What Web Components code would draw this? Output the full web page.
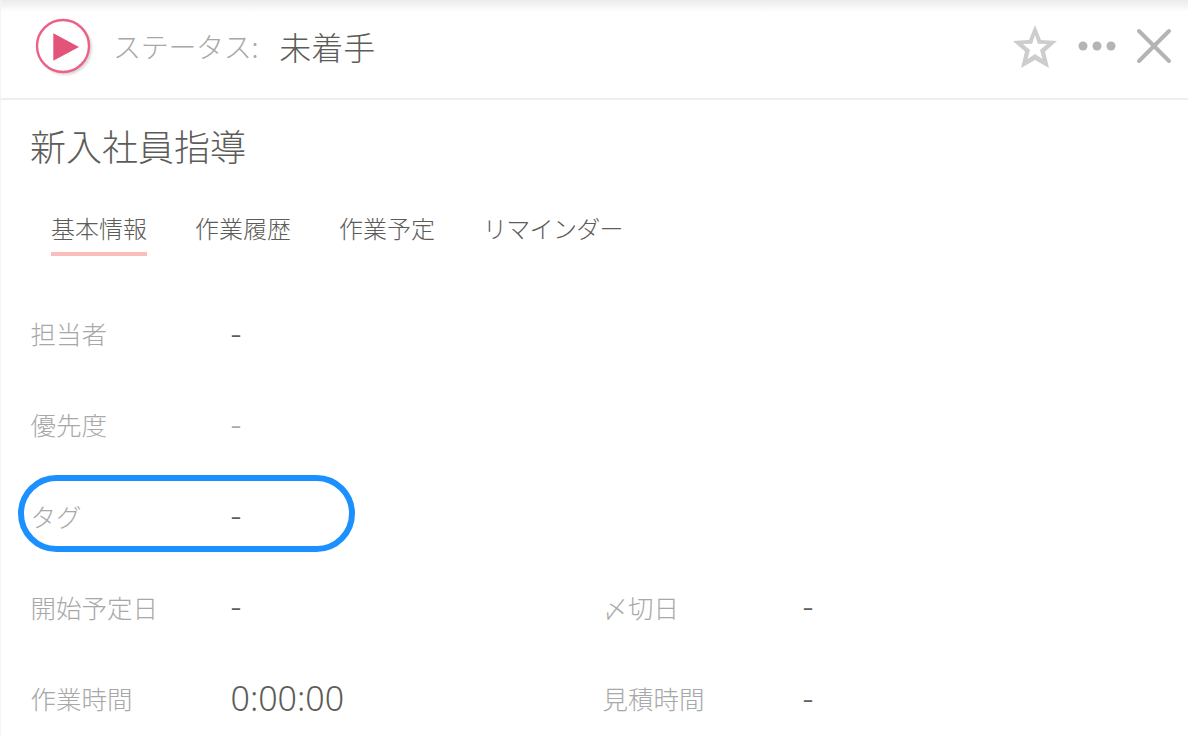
<!DOCTYPE html>
<html lang="ja">
<head>
<meta charset="utf-8">
<title>新入社員指導</title>
<style>
html, body { margin: 0; height: 100%; background: #fff; overflow: hidden; }
body { font-family: "Noto Sans CJK JP", "Liberation Sans", sans-serif; font-weight: 300; color: #5c5c58; }
</style>
</head>
<body>
<task-panel>
	<task-header slot="header" status="未着手"></task-header>
	<task-tabs title="新入社員指導" tabs="基本情報,作業履歴,作業予定,リマインダー"></task-tabs>
	<task-fields>
		<task-field label="担当者">-</task-field>
		<span></span>
		<task-field label="優先度" muted>-</task-field>
		<span></span>
		<task-field label="タグ" circled>-</task-field>
		<span></span>
		<task-field label="開始予定日">-</task-field>
		<task-field label="〆切日">-</task-field>
		<task-field label="作業時間">0:00:00</task-field>
		<task-field label="見積時間">-</task-field>
	</task-fields>
</task-panel>

<script>
class TaskPanel extends HTMLElement {
	constructor() {
		super();
		const shadow = this.attachShadow({mode: 'open'});
		shadow.innerHTML = `
			<style>
			:host { display: flex; flex-direction: column; height: 736px; box-sizing: border-box; overflow: hidden; border-left: 1px solid #f4f4f4; }
			::slotted(*) { flex: none; }
			</style>
			<slot name="header"></slot>
			<slot></slot>
		`;
	}
}

class TaskHeader extends HTMLElement {
	constructor() {
		super();
		const shadow = this.attachShadow({mode: 'open'});
		shadow.innerHTML = `
			<style>
			:host {
				display: flex; align-items: center; height: 100px; box-sizing: border-box;
				padding: 0 16px 6px 32px;
				border-bottom: 2px solid #eeeeee;
				background: linear-gradient(#ebebeb, #fff 12px);
			}
			.play { width: 60px; height: 60px; flex: none; display: block; }
			.key { margin-left: 20px; font-size: 28px; letter-spacing: -0.3px; color: #a8a8a8; }
			.val { margin-left: 21px; font-size: 32px; color: #5c5c58; }
			.tools { margin-left: auto; display: flex; align-items: center; gap: 20px; }
			svg { display: block; }
			</style>
			<svg class="play" viewBox="0 0 60 60">
				<defs><filter id="soft"><feGaussianBlur stdDeviation="1"/></filter></defs>
				<circle cx="32" cy="32" r="27" fill="#d8d8d8" filter="url(#soft)"/>
				<circle cx="30" cy="30" r="26" fill="#fff" stroke="#ee5f86" stroke-width="2.4"/>
				<path d="M20.300 17.300 L46 31 L20.300 44.700 Z" fill="#e25479"/>
			</svg>
			<span class="key">ステータス:</span>
			<span class="val"></span>
			<div class="tools">
				<svg width="46" height="46" viewBox="0 0 46 46">
					<path d="M23 2 L29 17 L45 18 L33 28.500 L37 45 L23 37 L9 45 L13 28.500 L1 18 L17 17 Z" fill="#cdcdcd"/>
					<path d="M23 12 L25.800 20.800 L35 21 L28 27 L30.500 36 L23 31 L15.500 36 L18 27 L11 21 L20.200 20.800 Z" fill="#fff"/>
				</svg>
				<svg width="38" height="12" viewBox="0 0 38 12">
					<circle cx="5" cy="6" r="4.500" fill="#b4b4b4"/>
					<circle cx="19" cy="6" r="4.500" fill="#b4b4b4"/>
					<circle cx="33" cy="6" r="4.500" fill="#b4b4b4"/>
				</svg>
				<svg width="36" height="36" viewBox="0 0 36 36">
					<path d="M3 3 L33 33 M33 3 L3 33" stroke="#b4b4b4" stroke-width="4" stroke-linecap="round" fill="none"/>
				</svg>
			</div>
		`;
	}

	connectedCallback() {
		this.shadowRoot.querySelector('.val').textContent = this.getAttribute('status');
	}
}

class TaskTabs extends HTMLElement {
	constructor() {
		super();
		const shadow = this.attachShadow({mode: 'open'});
		shadow.innerHTML = `
			<style>
			:host { display: block; padding: 0 0 0 29px; }
			h1 { margin: 0; padding-top: 20px; font-size: 36px; line-height: 50px; font-weight: 300; color: #5c5c58; }
			nav { display: flex; gap: 48px; margin-top: 40px; padding-left: 21px; }
			span { display: block; box-sizing: border-box; font-size: 24px; line-height: 36px; color: #5c5c58; height: 46px; }
			span.on { border-bottom: 4px solid #fdbcbc; }
			span.kana { letter-spacing: -0.7px; }
			</style>
			<h1></h1>
			<nav></nav>
		`;
	}

	connectedCallback() {
		this.shadowRoot.querySelector('h1').textContent = this.getAttribute('title');
		const nav = this.shadowRoot.querySelector('nav');
		this.getAttribute('tabs').split(',').forEach((name, i) => {
			const tab = document.createElement('span');
			tab.textContent = name;
			if (i == 0) tab.className = 'on';
			if (i == 3) tab.className = 'kana';
			nav.appendChild(tab);
		});
	}
}

class TaskFields extends HTMLElement {
	constructor() {
		super();
		const shadow = this.attachShadow({mode: 'open'});
		shadow.innerHTML = `
			<style>
			:host { display: grid; grid-template-columns: 572px 1fr; grid-auto-rows: 91.25px; padding: 31px 0 0 29.5px; }
			</style>
			<slot></slot>
		`;
	}
}

class TaskField extends HTMLElement {
	constructor() {
		super();
		const shadow = this.attachShadow({mode: 'open'});
		shadow.innerHTML = `
			<style>
			:host { display: grid; grid-template-columns: 200px 1fr; align-items: center; position: relative; height: 91.25px; }
			.label { font-size: 25.5px; color: #a8a8a8; }
			.value { font-size: 34px; font-family: "Noto Sans", "Liberation Sans", sans-serif; color: #5c5c58; }
			:host([muted]) .value { color: #a8a8a8; }
			.ring { display: none; }
			:host([circled]) .ring {
				display: block; position: absolute; left: -12.500px; top: 5.500px; width: 337px; height: 77px;
				box-sizing: border-box; border: 6px solid #1b90ff; border-radius: 38.500px;
			}
			</style>
			<span class="label"></span>
			<span class="value"><slot></slot></span>
			<div class="ring"></div>
		`;
	}

	connectedCallback() {
		this.shadowRoot.querySelector('.label').textContent = this.getAttribute('label');
	}
}

customElements.define('task-panel', TaskPanel);
customElements.define('task-header', TaskHeader);
customElements.define('task-tabs', TaskTabs);
customElements.define('task-fields', TaskFields);
customElements.define('task-field', TaskField);
</script>
</body>
</html>
